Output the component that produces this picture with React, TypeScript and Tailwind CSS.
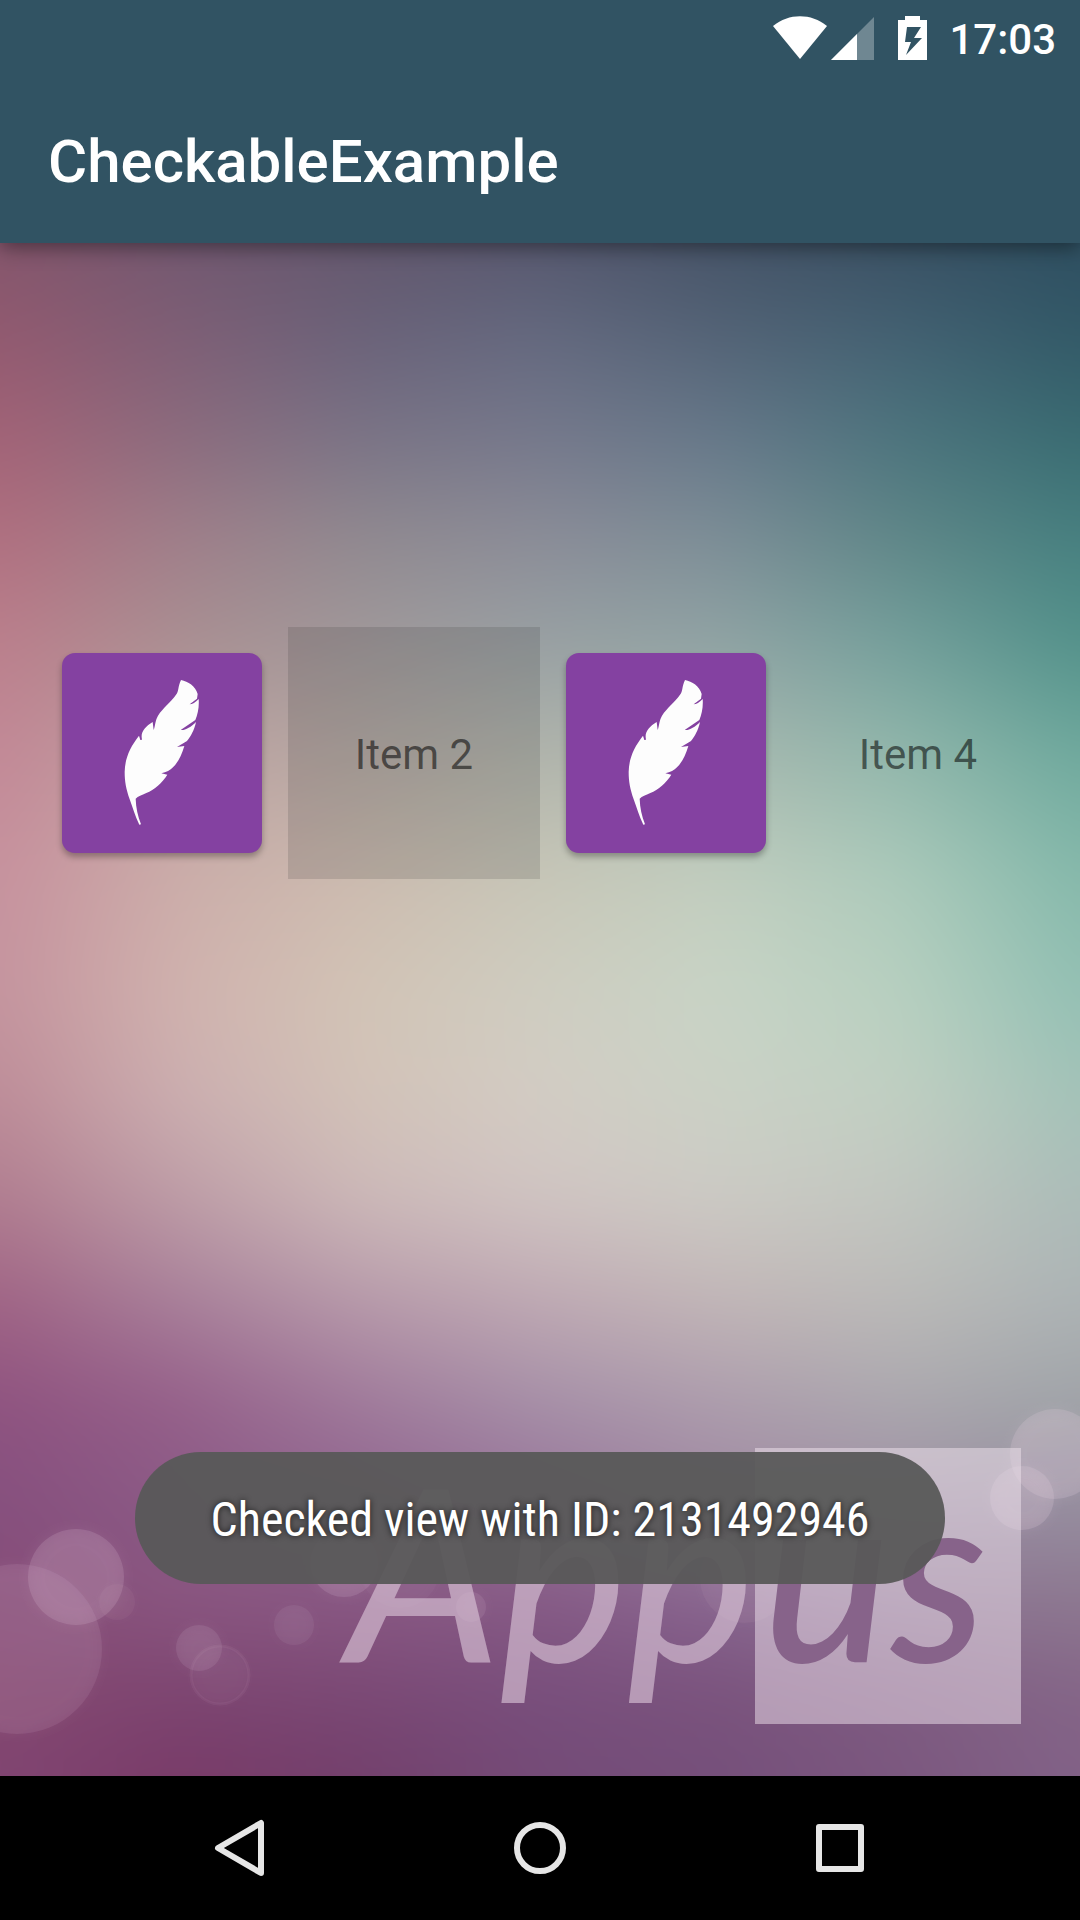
import { useState } from "react";

/* Colour mesh of the wallpaper: seven colours across for every height. */
const columns = 7;
const mesh: { y: number; colors: string[] }[] = [
  { y: 243, colors: ["#85566c", "#725870", "#64586e", "#57586f", "#465468", "#3a5164", "#2e4f61"] },
  { y: 340, colors: ["#935a70", "#7f5f76", "#6b637a", "#656a80", "#546477", "#446273", "#335a68"] },
  { y: 440, colors: ["#a36377", "#8c6c7e", "#7b7486", "#76798c", "#67798a", "#4d757e", "#3a6c72"] },
  { y: 540, colors: ["#b07080", "#a07f8a", "#918a90", "#8c8d98", "#7d8e97", "#608788", "#478080"] },
  { y: 640, colors: ["#bb7f8c", "#a98f92", "#a0989a", "#98a0a3", "#90a3a4", "#749f9b", "#53918a"] },
  { y: 760, colors: ["#c38997", "#bfa2a2", "#b5aaa3", "#b2b5ac", "#a9b9b0", "#93b8ac", "#70aa9e"] },
  { y: 880, colors: ["#c7929e", "#ccaeaa", "#cdbcb0", "#c8c7b8", "#c2cebf", "#accabb", "#86b9ab"] },
  { y: 1000, colors: ["#c4949e", "#d0b2ae", "#d2c4b6", "#cfcdc1", "#c8d4c6", "#b8d0c0", "#94c0b4"] },
  { y: 1100, colors: ["#bd8c98", "#cbaeb0", "#d2c2b8", "#d3ccc4", "#cbd1c6", "#c1cfc2", "#a4c2b8"] },
  { y: 1200, colors: ["#b07d90", "#bd9ca6", "#ccb8b8", "#d0c4c2", "#cccac4", "#c2c6c0", "#acbcb8"] },
  { y: 1300, colors: ["#a06485", "#a8809a", "#b79aaa", "#bfa9b3", "#c2b6b7", "#bbbab8", "#adb3b5"] },
  { y: 1400, colors: ["#8f5380", "#96608a", "#a07a9b", "#a690a8", "#ad9dad", "#aba8ae", "#a0a4a8"] },
  { y: 1500, colors: ["#86507e", "#8b5a86", "#90658f", "#98759a", "#a08aa2", "#9f90a4", "#968fa0"] },
  { y: 1600, colors: ["#874d78", "#8a5680", "#895883", "#865a85", "#886590", "#8c7492", "#8d7890"] },
  { y: 1700, colors: ["#85486f", "#7c4470", "#7a4874", "#784e7c", "#7a527c", "#7e5a80", "#846487"] },
  { y: 1776, colors: ["#804572", "#793b68", "#73406c", "#744b77", "#75507b", "#7b587f", "#826287"] },
];

const bokeh = [
  { cx: 17, cy: 1649, r: 85, o: 0.1 },
  { cx: 76, cy: 1577, r: 48, o: 0.16 },
  { cx: 117, cy: 1602, r: 18, o: 0.05 },
  { cx: 199, cy: 1648, r: 23, o: 0.11 },
  { cx: 220, cy: 1675, r: 29, o: 0.04 },
  { cx: 294, cy: 1625, r: 20, o: 0.07 },
  { cx: 344, cy: 1563, r: 34, o: 0.14 },
  { cx: 400, cy: 1568, r: 40, o: 0.04 },
  { cx: 471, cy: 1607, r: 15, o: 0.1 },
  { cx: 745, cy: 1578, r: 45, o: 0.06 },
  { cx: 1055, cy: 1454, r: 45, o: 0.2 },
  { cx: 1022, cy: 1498, r: 32, o: 0.2 },
];

function Wallpaper() {
  return (
    <svg
      aria-hidden="true"
      className="absolute inset-0 h-full w-full"
      viewBox="0 243 1080 1533"
      preserveAspectRatio="xMidYMid slice"
    >
      <defs>
        {mesh.map((row, i) => {
          const from = i === 0 ? 42 : mesh[i - 1].y;
          const to = i === 0 ? 43 : row.y;
          return (
            <g key={row.y}>
              <linearGradient id={`row${i}`} gradientUnits="userSpaceOnUse" x1="0" x2="1080" y1="0" y2="0">
                {row.colors.map((c, k) => (
                  <stop key={k} offset={k / (columns - 1)} stopColor={c} />
                ))}
              </linearGradient>
              <linearGradient id={`fade${i}`} gradientUnits="userSpaceOnUse" x1="0" x2="0" y1={from} y2={to}>
                <stop offset="0" stopColor="#fff" stopOpacity="0" />
                <stop offset="1" stopColor="#fff" />
              </linearGradient>
              <mask id={`mask${i}`} maskUnits="userSpaceOnUse" x="-200" y="43" width="1480" height="1933">
                <rect x="-200" y={from} width="1480" height={1976 - from} fill={`url(#fade${i})`} />
              </mask>
            </g>
          );
        })}
        <filter id="soften" filterUnits="userSpaceOnUse" x="-200" y="43" width="1480" height="1933" colorInterpolationFilters="sRGB">
          <feGaussianBlur stdDeviation="32" />
        </filter>
        <filter id="glow" x="-50%" y="-50%" width="200%" height="200%">
          <feGaussianBlur stdDeviation="7" />
        </filter>
      </defs>
      <g filter="url(#soften)">
        {mesh.map((row, i) => (
          <rect key={row.y} x="-200" y="43" width="1480" height="1933" fill={`url(#row${i})`} mask={`url(#mask${i})`} />
        ))}
      </g>
      {bokeh.map((b) => (
        <g key={`${b.cx}-${b.cy}`} fill="#e8d0e0">
          <circle cx={b.cx} cy={b.cy} r={b.r} opacity={b.o} />
          <circle cx={b.cx} cy={b.cy} r={b.r} opacity={b.o / 2} filter="url(#glow)" />
        </g>
      ))}
      <circle cx="220" cy="1675" r="29" fill="none" stroke="#e8d0e0" strokeWidth="3" opacity="0.06" />
    </svg>
  );
}

function Feather() {
  return (
    <svg aria-hidden="true" className="h-full w-full" viewBox="37 39 600 600">
      <path
        fill="#fdfdfd"
        d="M394 120C415 124 438 139 444 162L442 176L420 193C428 193 437 187 447 177C449 202 444 222 437 240L393 270C405 272 424 262 439 246C434 270 423 290 412 303L382 321L404 318C396 347 383 369 370 382C362 390 350 397 335 400L353 404C338 428 314 449 290 459C276 465 265 469 258 476C259 504 264 526 274 553L269 554C256 528 250 504 240 478C229 446 225 424 225 396C226 354 241 322 268 287L272 300L277 299C274 285 277 276 284 267C291 259 300 251 309 246L312 270C317 258 316 242 325 227C340 203 364 186 379 164C388 155 384 140 394 120Z"
      />
    </svg>
  );
}

function CheckableItem({ label, initial }: { label: string; initial: "icon" | "text" | "pressed" }) {
  const [view, setView] = useState(initial);
  return (
    <button
      type="button"
      aria-label={label}
      aria-pressed={view === "icon"}
      onClick={() => setView(view === "icon" ? "text" : "icon")}
      className={
        view === "pressed"
          ? "flex aspect-square items-center justify-center bg-[#303030]/16"
          : "flex aspect-square items-center justify-center"
      }
    >
      {view === "icon" ? (
        <span className="m-[26px] flex-1 self-stretch rounded-[13px] bg-[#8441a1] shadow-[0_4px_6px_rgba(0,0,0,0.3)]">
          <Feather />
        </span>
      ) : (
        <span className="pt-1 text-[42px] leading-[48px] text-black/55">{label}</span>
      )}
    </button>
  );
}

function StatusBar() {
  return (
    <div className="flex h-[76px] items-center justify-end pr-6 text-white">
      <svg aria-hidden="true" className="mr-1 h-[44px] w-[54px]" viewBox="0 0 54 44">
        <path d="M0 10C16-3 38-3 54 10L27 43Z" fill="currentColor" />
      </svg>
      <svg aria-hidden="true" className="mr-6 h-[44px] w-[43px]" viewBox="0 0 43 44">
        <path d="M43 1V44H0Z" fill="currentColor" opacity="0.3" />
        <path d="M26 18V44H0Z" fill="currentColor" />
      </svg>
      <svg aria-hidden="true" className="mr-[22px] h-[44px] w-[29px]" viewBox="0 0 29 44">
        <path
          fillRule="evenodd"
          d="M7 0H22V4H29V44H0V4H7ZM9 11L7 26H13L8 39L24 22H16L23 11Z"
          fill="currentColor"
        />
      </svg>
      <time className="pt-1 text-[42px] leading-[48px] font-medium">17:03</time>
    </div>
  );
}

export default function App() {
  return (
    <div className="flex min-h-screen flex-col bg-black font-[Roboto,sans-serif]">
      <header className="relative z-10 bg-[#315363] shadow-[0_4px_20px_rgba(0,0,0,0.45)]">
        <StatusBar />
        <h1 className="px-12 pt-[50px] pb-[45px] text-[60px] leading-[72px] font-medium text-white">CheckableExample</h1>
      </header>

      <main className="relative flex-1 overflow-hidden">
        <Wallpaper />

        <div
          aria-label="Appus"
          className="absolute right-[59px] bottom-[52px] flex h-[276px] font-[Lato,sans-serif] text-[240px] leading-[242px] font-medium italic"
        >
          <span className="text-[#e0cbdc]/60">App</span>
          <span className="w-[266px] bg-[#f0e4ee]/50 pl-2 text-[#87638a]">us</span>
        </div>

        <div className="relative grid grid-cols-4 px-9 pt-96">
          <CheckableItem label="Item 1" initial="icon" />
          <CheckableItem label="Item 2" initial="pressed" />
          <CheckableItem label="Item 3" initial="icon" />
          <CheckableItem label="Item 4" initial="text" />
        </div>

        <div
          role="status"
          className="absolute inset-x-0 bottom-48 mx-auto flex h-[132px] w-3/4 items-center justify-center rounded-full bg-[#585858]/95 pt-1 font-['Roboto_Condensed',Roboto,sans-serif] text-[48px] leading-[56px] whitespace-nowrap text-white [text-shadow:0_0_6px_rgba(0,0,0,0.7)]"
        >
          Checked view with ID: 2131492946
        </div>
      </main>

      <nav className="flex h-36 px-[90px] text-[#e6e6e6]">
        <button type="button" aria-label="Back" className="flex flex-1 items-center justify-center">
          <svg className="h-[60px] w-[60px]" viewBox="0 0 60 60" fill="none" stroke="currentColor" strokeWidth="6" strokeLinejoin="round">
            <path d="M51 5V55L8 30Z" />
          </svg>
        </button>
        <button type="button" aria-label="Home" className="flex flex-1 items-center justify-center">
          <svg className="h-[60px] w-[60px]" viewBox="0 0 60 60" fill="none" stroke="currentColor" strokeWidth="6">
            <circle cx="30" cy="30" r="23" />
          </svg>
        </button>
        <button type="button" aria-label="Recent apps" className="flex flex-1 items-center justify-center">
          <svg className="h-[60px] w-[60px]" viewBox="0 0 60 60" fill="none" stroke="currentColor" strokeWidth="6" strokeLinejoin="round">
            <path d="M9 9H51V51H9Z" />
          </svg>
        </button>
      </nav>
    </div>
  );
}
